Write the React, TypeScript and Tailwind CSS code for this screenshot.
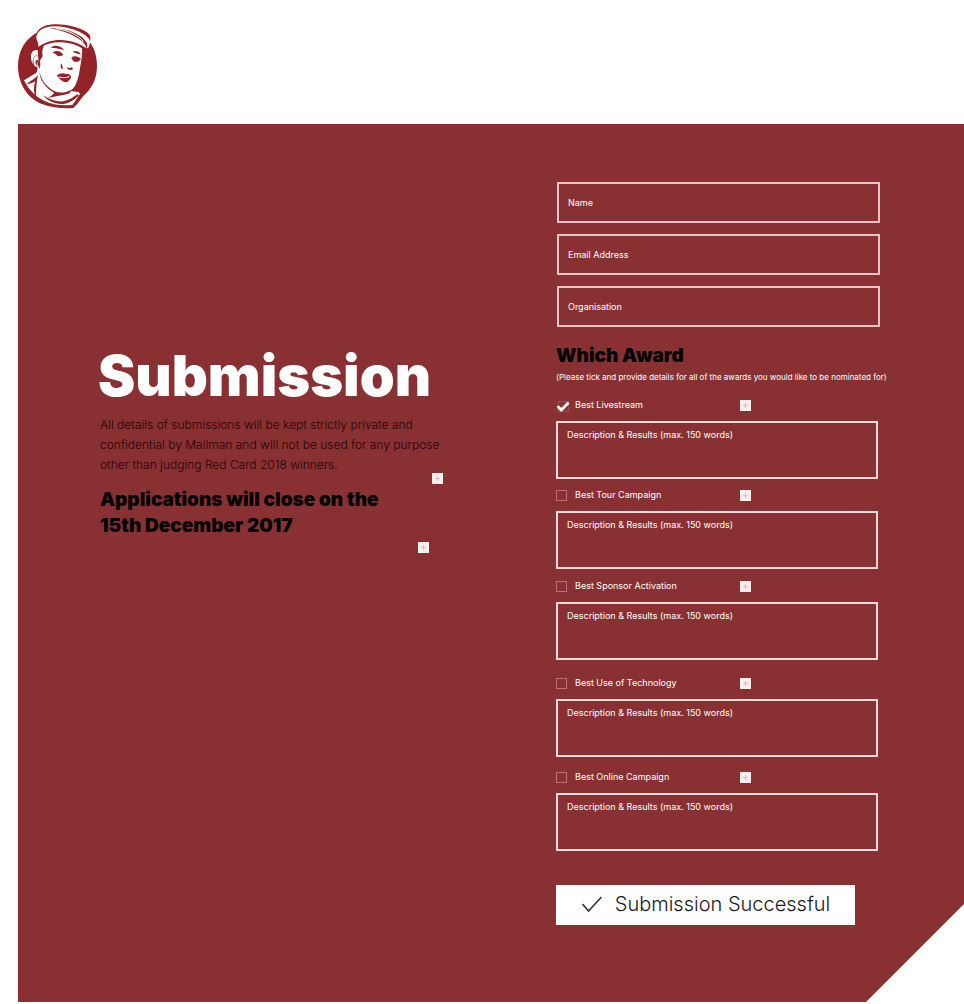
import { Check } from "lucide-react";

const awards = [
  { id: "livestream", name: "Best Livestream", checked: true, space: "mt-1" },
  { id: "tour", name: "Best Tour Campaign", checked: false, space: "mt-0" },
  { id: "sponsor", name: "Best Sponsor Activation", checked: false, space: "mt-px" },
  { id: "technology", name: "Best Use of Technology", checked: false, space: "mt-[7px]" },
  { id: "online", name: "Best Online Campaign", checked: false, space: "mt-1" },
];

const fields = [
  { id: "name", label: "Name", type: "text" },
  { id: "email", label: "Email Address", type: "email" },
  { id: "organisation", label: "Organisation", type: "text" },
];

function Logo() {
  return (
    <svg viewBox="0 0 288 300" className="h-[100px] w-24" role="img" aria-label="Mailman">
      {/* disc and cap outline */}
      <path
        fill="#922328"
        d="M80 50C44 70 24 106 24 150c0 54 30 98 72 114 30 12 66 14 94 12 12-10 20-24 30-36 26-22 41-52 41-90 0-30-8-54-22-72 2-6 4-16 0-22C222 38 176 24 132 25c-24 1-42 8-52 25z"
      />
      {/* cap, face, neck and shirt */}
      <path
        fill="#fff"
        d="M79 62C84 40 108 30 136 31c38 1 82 16 100 36 6 8 4 20-2 30l-18-4c2 20-2 44-6 62-2 18-6 34-12 48-4 10-10 16-18 22l26 3 4 6-22 32c-28 4-62 0-86-12-26-12-48-36-60-61l36-22c4-2 5-12 4-18-14-4-20-18-19-34 1-12 10-20 22-16-1-10 0-14 0-20-4-8-7-18-7-25z"
      />
      <g fill="#922328">
        {/* cap brim shadow and folds */}
        <path d="M82 94c26-19 58-26 92-20 24 4 42 12 56 24l-3 6c-18-14-34-21-58-24-30-4-58 0-82 16z" />
        <path d="M118 37c38-2 78 10 98 27 14 12 20 22 14 34-2-14-16-26-38-38-22-12-46-18-74-23z" />
        {/* hairline and ear */}
        <path d="M84 96l20-12c-6 10-9 24-6 36l-8 14c2 10 1 18-2 24l-5-14c2-6 2-10 2-18-2-10-2-20-1-30z" />
        <path d="M86 122c-8-6-16 0-16 12 1 12 5 22 12 28-10-2-15-14-14-28 2-14 10-20 18-12z" />
        <path d="M77 134c3-4 7-2 8 3-4 1-4 8-2 13-5-2-8-9-6-16z" />
        {/* brows and eyes */}
        <path d="M122 95c12-10 28-6 42 7-14-4-28-6-42-7z" />
        <path d="M127 110c10-9 27-6 33 7-6 4-14 5-20 1-2-4-6-7-13-8z" />
        <path d="M188 108c8-6 20-2 25 8-8-3-17-4-25-8z" />
        <path d="M184 124c10-6 20-3 29 4-6 12-20 12-25 5z" />
        {/* nose */}
        <path d="M156 142c-6 6-6 13 1 18l2-5c-3-4-3-8-3-13zM169 154c6 3 12 3 17-1l3 7c-8 4-15 2-20-6z" />
        {/* mouth */}
        <path d="M140 179c10-8 20-9 27-5 6-2 12 1 17 7-3 10-9 17-17 18-11-2-18-10-27-20z" />
        {/* chin and neck shadow */}
        <path d="M88 162c3 28 20 50 46 64 16 7 32 4 50-5l-4 10c-14 6-26 6-38 9l-28 6c10-7 16-10 18-16-24-14-44-36-44-68z" />
        {/* lapels and collar */}
        <path d="M84 176c-8 12-24 18-34 28 12 0 20-4 26-9-4 12-6 24-2 40l4 4c0-22 2-44 6-63z" />
        <path d="M98 238c20 12 42 20 62 18 18-4 28-12 44-22l2 5c-14 12-24 20-42 24-26 4-50-8-66-25z" />
      </g>
      <g fill="none" stroke="#fff" strokeWidth="3" strokeLinecap="round">
        <path d="M147 183c10 3 20 3 30-1" />
        <path d="M138 38c34 4 66 18 82 38" />
      </g>
    </svg>
  );
}

function PlusButton({ label }: { label: string }) {
  return (
    <button
      type="button"
      aria-label={label}
      className="flex size-[11px] shrink-0 items-center justify-center bg-[#fbeeee]"
    >
      <svg viewBox="0 0 11 11" className="size-[11px]" fill="none" stroke="#dfbcbc">
        <path d="M5.5 3v5M3 5.5h5" />
      </svg>
    </button>
  );
}

export default function App() {
  return (
    <div className="min-h-screen bg-white pl-[18px] font-['Inter',sans-serif]">
      <header className="h-[124px] pt-4">
        <a href="#" className="-ml-2 inline-block">
          <Logo />
        </a>
      </header>

      <main className="grid grid-cols-[minmax(0,458fr)_minmax(0,328fr)] bg-[#893132] px-20 pt-[58px] pb-[77px] [clip-path:polygon(0_0,100%_0,100%_calc(100%_-_98px),calc(100%_-_98px)_100%,0_100%)]">
        <section className="pt-[162px]">
          <h1 className="text-[56px] leading-[64px] font-black text-white">Submission</h1>
          <div className="flex w-[345px] flex-col items-end pl-[2px]">
            <p className="mt-[7px] w-full text-[12px] leading-5 font-light whitespace-nowrap text-[#1c0406]">
              All details of submissions will be kept strictly private and
              <br />
              confidential by Mailman and will not be used for any purpose
              <br />
              other than judging Red Card 2018 winners.
            </p>
            <div className="-mt-[2px] mb-[3px] flex">
              <PlusButton label="More about privacy" />
            </div>
            <p className="w-full text-[19px] leading-[26px] font-black text-black">
              Applications will close on the
              <br />
              15th December 2017
            </p>
            <div className="mt-[3px] mr-[14px] flex">
              <PlusButton label="More about the closing date" />
            </div>
          </div>
        </section>

        <form onSubmit={(e) => e.preventDefault()}>
          <div className="mr-1 ml-px flex flex-col gap-[11px]">
            {fields.map((f) => (
              <input
                key={f.id}
                id={f.id}
                type={f.type}
                aria-label={f.label}
                placeholder={f.label}
                className="h-[41px] w-full border-2 border-[#e3c4c4] bg-transparent px-[9px] text-[9px] text-white outline-none placeholder:text-white placeholder:opacity-100"
              />
            ))}
          </div>

          <h2 className="mt-[17px] text-[19px] leading-6 font-black text-black">Which Award</h2>
          <p className="mt-px text-[8px] leading-4 whitespace-nowrap text-white">
            (Please tick and provide details for all of the awards you would like to be nominated for)
          </p>

          {awards.map((a) => (
            <div key={a.id} className={a.space}>
              <div className="flex h-8 items-center">
                <label className="flex w-[184px] items-center gap-2 text-[9px] text-white">
                  <span className="grid size-[11px] place-items-center">
                    <input
                      type="checkbox"
                      defaultChecked={a.checked}
                      className="peer col-start-1 row-start-1 size-[11px] appearance-none border border-[#b87374] checked:border-[#9c4e4f]"
                    />
                    <Check
                      className="pointer-events-none col-start-1 row-start-1 hidden size-[14px] text-white peer-checked:block"
                      strokeWidth={5}
                    />
                  </span>
                  {a.name}
                </label>
                <PlusButton label={"Add to " + a.name} />
              </div>
              <textarea
                aria-label={a.name + " description and results"}
                placeholder="Description & Results (max. 150 words)"
                className="block h-[58px] w-[322px] resize-none border-2 border-[#eedcdc] bg-transparent px-[9px] py-1 text-[9px] leading-4 text-white outline-none placeholder:text-white placeholder:opacity-100"
              />
            </div>
          ))}

          <button
            type="submit"
            className="mt-[34px] flex h-10 w-[299px] items-center justify-center gap-3 bg-white pb-[3px] text-[20px] font-light text-[#1c1820]"
          >
            <svg viewBox="0 0 22 18" className="h-[18px] w-[22px]" fill="none" stroke="#333" strokeWidth="1.6">
              <path d="M1.5 9l6 7L20.500 2" />
            </svg>
            Submission Successful
          </button>
        </form>
      </main>
    </div>
  );
}
